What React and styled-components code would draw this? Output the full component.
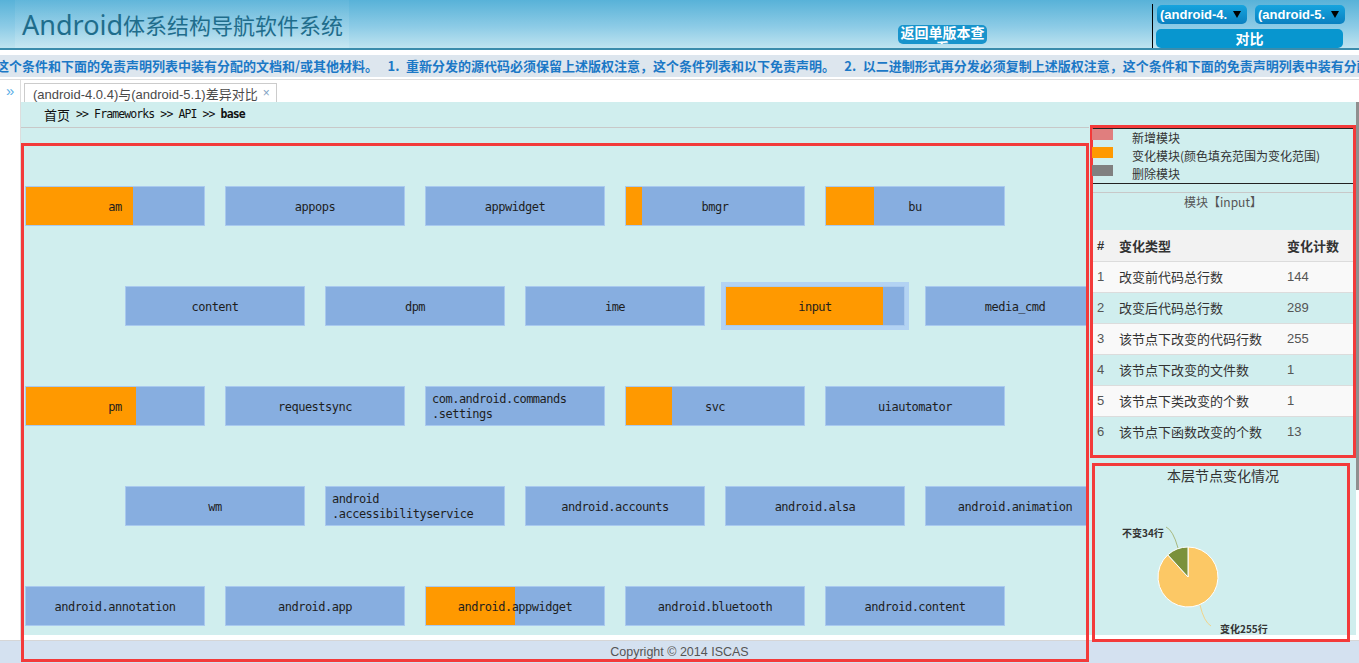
import React from 'react';
import styled, { createGlobalStyle } from 'styled-components';

const CN = '"Noto Sans CJK SC", sans-serif';
const LATIN = '"Liberation Sans", "Noto Sans CJK SC", sans-serif';
const MONO = '"DejaVu Sans Mono", "Noto Sans CJK SC", monospace';
const RED = '#f33a3a';
const CYAN = '#d0eeee';

const GlobalStyle = createGlobalStyle`
	html, body {
		margin: 0;
		padding: 0;
		background: #fff;
		overflow: hidden;
	}
	body {
		font-family: ${LATIN};
		font-size: 13px;
		color: #333;
	}
	* {
		box-sizing: border-box;
	}
`;

const Header = styled.header`
	display: flex;
	height: 50px;
	background: linear-gradient(#58b2d8, #8ccbe6 55%, #bfe4f0);
	border-bottom: 2px solid #3b8cac;
`;

const TitleBox = styled.div`
	width: 334px;
	margin-left: 15px;
	padding-left: 7px;
	display: flex;
	align-items: center;
	background: linear-gradient(rgba(255, 255, 255, 0.05), rgba(255, 255, 255, 0.14));
	color: #1f6d8c;
	font-family: ${CN};
	font-size: 22px;
	white-space: nowrap;
	span {
		font-family: 'Noto Sans', sans-serif;
		font-size: 27px;
	}
`;

const ReturnButton = styled.div`
	align-self: flex-start;
	margin: 25px 0 0 549px;
	width: 89px;
	height: 19px;
	border-radius: 5px;
	background: #1894cc;
	color: #fff;
	font: bold 14px/15px ${CN};
	text-align: center;
	overflow: hidden;
	cursor: pointer;
`;

const CompareBox = styled.div`
	margin: 4px 0 0 165px;
	height: 44px;
	border-left: 1px solid #000;
	padding: 1px 0 0 4px;
`;

const SelectRow = styled.div`
	display: flex;
	gap: 8px;
`;

const Select = styled.div`
	width: 90px;
	height: 19px;
	border-radius: 5px;
	background: linear-gradient(#16a4de, #0a80c0);
	display: flex;
	align-items: center;
	padding: 0 6px 0 3px;
	color: #fff;
	font: bold 13px ${LATIN};
`;

const SelectText = styled.span`
	width: 68px;
	overflow: hidden;
	white-space: nowrap;
`;

const SelectArrow = styled.span`
	margin-left: 6px;
	width: 0;
	height: 0;
	border-left: 4px solid transparent;
	border-right: 4px solid transparent;
	border-top: 7px solid #000;
`;

const CompareButton = styled.div`
	margin: 5px 0 0 -1px;
	width: 187px;
	height: 19px;
	border-radius: 5px;
	background: #0896cf;
	color: #fff;
	font: bold 14px/19px ${CN};
	text-align: center;
	cursor: pointer;
`;

const Notice = styled.div`
	margin: 5px 0 2px;
	height: 22px;
	background: #dde6ee;
	overflow: hidden;
	white-space: nowrap;
	color: #1b78c6;
	font: bold 13px/22px ${CN};
	text-indent: -4px;
`;

const Workspace = styled.div`
	display: flex;
	height: 562px;
	border-top: 1px solid #ddd;
	border-bottom: 1px solid #d6d6d6;
`;

const Sidebar = styled.div`
	width: 21px;
	border-right: 1px solid #ddd;
	color: #5aaee6;
	font: 15px ${LATIN};
	padding: 2px 0 0 6px;
`;

const MainCol = styled.div`
	flex: 1;
	display: flex;
	flex-direction: column;
`;

const TabStrip = styled.div`
	height: 22px;
	padding: 3px 0 0 3px;
	display: flex;
`;

const Tab = styled.div`
	width: 253px;
	height: 19px;
	border: 1px solid #ccc;
	border-bottom: 0;
	background: #fff;
	padding: 0 0 0 8px;
	display: flex;
	align-items: center;
	color: #4a4a4a;
	font: 13px ${LATIN};
	white-space: nowrap;
`;

const TabClose = styled.span`
	margin-left: 5px;
	color: #7fa3c4;
	font-size: 12px;
`;

const PanelRow = styled.div`
	display: flex;
	height: 533px;
`;

const Panel = styled.div`
	flex: 1;
	display: flex;
	background: ${CYAN};
`;

const ScrollTrack = styled.div`
	width: 3px;
`;

const ScrollThumb = styled.div`
	height: 388px;
	background: #8f8f8f;
`;

const LeftCol = styled.div`
	width: 1068px;
`;

const Breadcrumb = styled.div`
	height: 26px;
	border-bottom: 1px solid #c8c8c8;
	padding: 0 0 1px 23px;
	display: flex;
	align-items: center;
	color: #111;
	font: 13px ${CN};
`;

const CrumbPath = styled.span`
	font: 11.5px ${MONO};
	letter-spacing: -0.9px;
	white-space: pre;
	b {
		font-weight: bold;
	}
`;

const Diagram = styled.div`
	position: relative;
	z-index: 1;
	margin-top: 15px;
	height: 519px;
	border: 3px solid ${RED};
	padding-top: 40px;
	overflow: hidden;
`;

const NodeRow = styled.div`
	display: flex;
	gap: 20px;
	padding-left: ${(p) => (p.$shift ? 101 : 1)}px;
	margin-bottom: 60px;
`;

const Node = styled.div`
	flex: 0 0 180px;
	height: 40px;
	border: 1px solid #a9c9ee;
	background: ${(p) =>
		p.$change ? `linear-gradient(90deg, #ff9900 ${p.$change}%, #87aee0 ${p.$change}%)` : '#87aee0'};
	box-shadow: ${(p) => (p.$active ? '0 0 0 4px #b3d3f3' : 'none')};
	display: flex;
	align-items: center;
	justify-content: ${(p) => (p.$multi ? 'flex-start' : 'center')};
	padding: 2px 6px 0;
	color: #1e1e1e;
	font: 12px/15px ${MONO};
	letter-spacing: -0.5px;
	white-space: pre-line;
`;

const SideCol = styled.div`
	width: 267px;
	padding-top: 23px;
	display: flex;
	flex-direction: column;
`;

const InfoBox = styled.div`
	position: relative;
	z-index: 1;
	flex-shrink: 0;
	margin-left: 1px;
	width: 266px;
	height: 333px;
	border: 3px solid ${RED};
`;

const Legend = styled.div`
	border-top: 1px solid #222;
	border-bottom: 1px solid #222;
`;

const LegendItem = styled.div`
	display: flex;
	height: 18px;
	color: #333;
	font: 12px/18px ${CN};
`;

const Swatch = styled.span`
	width: 21px;
	height: 11px;
	margin: 0 19px 0 -1px;
	background: ${(p) => p.$color};
`;

const ModuleTitle = styled.div`
	margin-top: 8px;
	height: 38px;
	border-top: 1px solid #c8c8c8;
	text-align: center;
	color: #555;
	font: 12px/18px ${CN};
`;

const Table = styled.table`
	width: 100%;
	border-collapse: collapse;
	font: 13px ${LATIN};
	color: #333;
	th,
	td {
		height: 31px;
		padding: 0 4px;
		text-align: left;
		border-top: 1px solid #dcdcdc;
	}
	th {
		border-top: 0;
		background: #f2f2f2;
		font-weight: bold;
	}
	tbody tr:nth-child(odd) {
		background: #f9f9f9;
	}
	td:first-child,
	td:last-child {
		color: #555;
	}
`;

const PieBox = styled.div`
	position: relative;
	z-index: 1;
	flex-shrink: 0;
	margin: 5px 0 0 3px;
	width: 258px;
	height: 179px;
	border: 3px solid ${RED};
`;

const Footer = styled.footer`
	height: 22px;
	background: #d4e1f0;
	color: #555;
	font: 12.5px/22px ${LATIN};
	text-align: center;
`;

const rows = [
	{
		shift: false,
		nodes: [
			{ name: 'am', change: 60 },
			{ name: 'appops' },
			{ name: 'appwidget' },
			{ name: 'bmgr', change: 9 },
			{ name: 'bu', change: 27 },
		],
	},
	{
		shift: true,
		nodes: [
			{ name: 'content' },
			{ name: 'dpm' },
			{ name: 'ime' },
			{ name: 'input', change: 88, active: true },
			{ name: 'media_cmd' },
		],
	},
	{
		shift: false,
		nodes: [
			{ name: 'pm', change: 62 },
			{ name: 'requestsync' },
			{ name: 'com.android.commands\n.settings', multi: true },
			{ name: 'svc', change: 26 },
			{ name: 'uiautomator' },
		],
	},
	{
		shift: true,
		nodes: [
			{ name: 'wm' },
			{ name: 'android\n.accessibilityservice', multi: true },
			{ name: 'android.accounts' },
			{ name: 'android.alsa' },
			{ name: 'android.animation' },
		],
	},
	{
		shift: false,
		nodes: [
			{ name: 'android.annotation' },
			{ name: 'android.app' },
			{ name: 'android.appwidget', change: 50 },
			{ name: 'android.bluetooth' },
			{ name: 'android.content' },
		],
	},
];

const stats = [
	['改变前代码总行数', 144],
	['改变后代码总行数', 289],
	['该节点下改变的代码行数', 255],
	['该节点下改变的文件数', 1],
	['该节点下类改变的个数', 1],
	['该节点下函数改变的个数', 13],
];

const notice =
	'这个条件和下面的免责声明列表中装有分配的文档和/或其他材料。\u3000 1.\u2002重新分发的源代码必须保留上述版权注意，这个条件列表和以下免责声明。\u3000 2.\u2002以二进制形式再分发必须复制上述版权注意，这个条件和下面的免责声明列表中装有分配的文档和/或其他材料。';

function PieChart() {
	const cx = 93;
	const cy = 111;
	const r = 30;
	const a = -Math.PI / 2 - (34 / 289) * Math.PI * 2;
	const ex = cx + r * Math.cos(a);
	const ey = cy + r * Math.sin(a);
	return (
		<svg width='252' height='173' viewBox='0 0 252 173'>
			<text x='128' y='15' textAnchor='middle' fontSize='14' fill='#333' fontFamily={CN}>
				本层节点变化情况
			</text>
			<path d={`M${cx},${cy} L${ex},${ey} A${r},${r} 0 1,0 ${cx},${cy - r} Z`} fill='#fcc865' stroke='#fff' strokeWidth='1' />
			<path d={`M${cx},${cy} L${cx},${cy - r} A${r},${r} 0 0,0 ${ex},${ey} Z`} fill='#7b913b' stroke='#fff' strokeWidth='1' />
			<path d='M83,82 Q78,64 71,61' fill='none' stroke='#a8b880' strokeWidth='1' />
			<path d='M105,139 Q109,156 116,160' fill='none' stroke='#f2d48a' strokeWidth='1' />
			<text x='27' y='71' fontSize='10' fontWeight='bold' fill='#333' fontFamily={CN}>
				不变34行
			</text>
			<text x='125' y='167' fontSize='10' fontWeight='bold' fill='#333' fontFamily={CN}>
				变化255行
			</text>
		</svg>
	);
}

export default function App() {
	return (
		<>
			<GlobalStyle />
			<Header>
				<TitleBox>
					<span>Android</span>体系结构导航软件系统
				</TitleBox>
				<ReturnButton>返回单版本查看</ReturnButton>
				<CompareBox>
					<SelectRow>
						<Select>
							<SelectText>(android-4.0.4)</SelectText>
							<SelectArrow />
						</Select>
						<Select>
							<SelectText>(android-5.1)</SelectText>
							<SelectArrow />
						</Select>
					</SelectRow>
					<CompareButton>对比</CompareButton>
				</CompareBox>
			</Header>
			<Notice>{notice}</Notice>
			<Workspace>
				<Sidebar>»</Sidebar>
				<MainCol>
					<TabStrip>
						<Tab>
							(android-4.0.4)与(android-5.1)差异对比
							<TabClose>×</TabClose>
						</Tab>
					</TabStrip>
					<PanelRow>
						<Panel>
							<LeftCol>
								<Breadcrumb>
									首页
									<CrumbPath>
										{' >> Frameworks >> API >> '}
										<b>base</b>
									</CrumbPath>
								</Breadcrumb>
								<Diagram>
									{rows.map((row, i) => (
										<NodeRow key={i} $shift={row.shift}>
											{row.nodes.map((n) => (
												<Node key={n.name} $change={n.change} $active={n.active} $multi={n.multi}>
													{n.name}
												</Node>
											))}
										</NodeRow>
									))}
								</Diagram>
							</LeftCol>
							<SideCol>
								<InfoBox>
									<Legend>
										<LegendItem>
											<Swatch $color='#e07e7e' />
											新增模块
										</LegendItem>
										<LegendItem>
											<Swatch $color='#ff9900' />
											变化模块(颜色填充范围为变化范围)
										</LegendItem>
										<LegendItem>
											<Swatch $color='#808080' />
											删除模块
										</LegendItem>
									</Legend>
									<ModuleTitle>模块【input】</ModuleTitle>
									<Table>
										<colgroup>
											<col style={{ width: 22 }} />
											<col style={{ width: 168 }} />
											<col style={{ width: 70 }} />
										</colgroup>
										<thead>
											<tr>
												<th>#</th>
												<th>变化类型</th>
												<th>变化计数</th>
											</tr>
										</thead>
										<tbody>
											{stats.map(([label, count], i) => (
												<tr key={label}>
													<td>{i + 1}</td>
													<td>{label}</td>
													<td>{count}</td>
												</tr>
											))}
										</tbody>
									</Table>
								</InfoBox>
								<PieBox>
									<PieChart />
								</PieBox>
							</SideCol>
						</Panel>
						<ScrollTrack>
							<ScrollThumb />
						</ScrollTrack>
					</PanelRow>
				</MainCol>
			</Workspace>
			<Footer>Copyright © 2014 ISCAS</Footer>
		</>
	);
}
